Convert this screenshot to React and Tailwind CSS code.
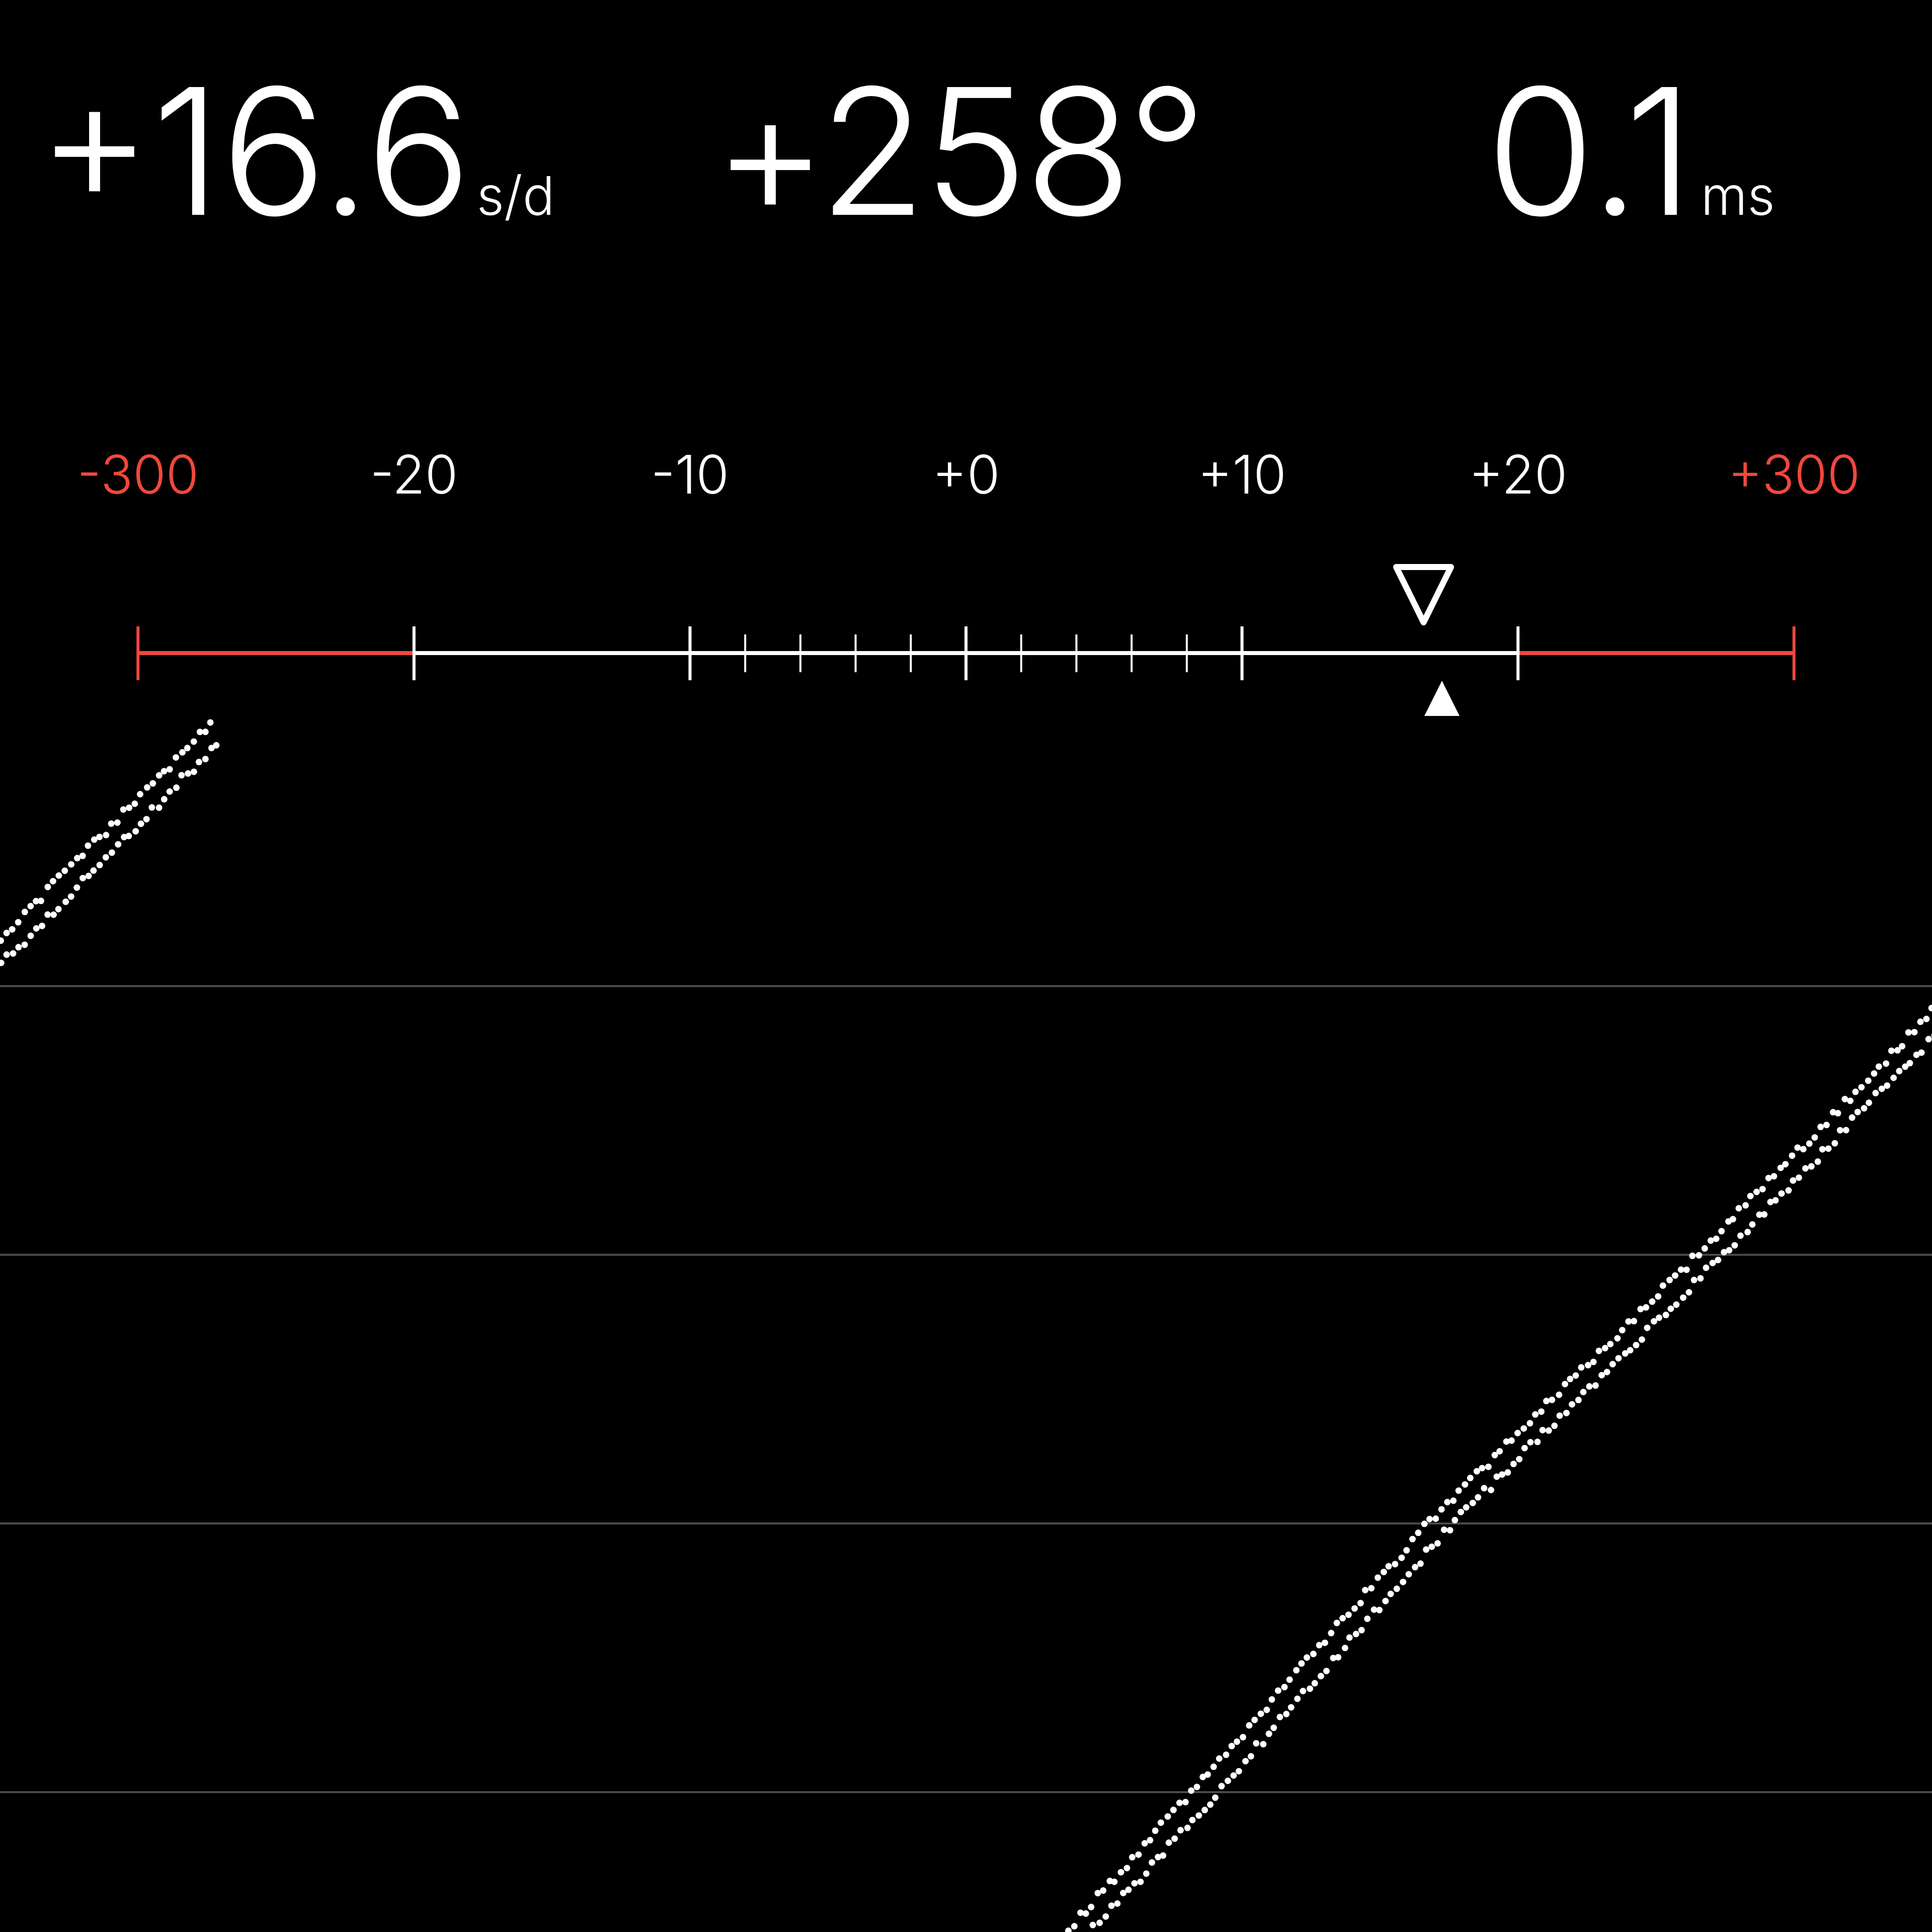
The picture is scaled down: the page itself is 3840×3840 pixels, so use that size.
import React from "react";

const RED = "#f0483c";
const FONT = "[font-family:Inter,'Liberation_Sans',sans-serif]";

const COL = 3840 / 7;
const majors = [0, 1, 2, 3, 4, 5, 6].map((k) => COL / 2 + k * COL);
const minors = [];
for (let k = 1; k < 10; k++) {
  if (k === 5) continue;
  minors.push(majors[2] + (k * COL) / 5);
}

function rnd(i) {
  const s = Math.sin(i * 12.9898 + 78.233) * 43758.5453;
  return s - Math.floor(s);
}

function piecewise(pts) {
  return (x) => {
    for (let i = 0; i < pts.length - 1; i++) {
      const [x0, y0] = pts[i];
      const [x1, y1] = pts[i + 1];
      if (x <= x1 || i === pts.length - 2) {
        const t = (x - x0) / (x1 - x0);
        return y0 + t * (y1 - y0);
      }
    }
    return 0;
  };
}

const TOP = 1425;
const lineRight = piecewise([
  [2080, 3880],
  [2118, 3840],
  [2370, 3562],
  [2837, 3028],
  [3375, 2494],
  [3840, 2012],
  [3900, 1950],
]);
const lineLeft = (x) => 1868 - x * 1.024;

function makeDots(fn, x0, x1, seed) {
  const out = [];
  let i = 0;
  for (let x = x0; x <= x1; x += 11.6) {
    const ny = (rnd(i * 1.7 + seed) - 0.5) * 17;
    const nx = (rnd(i * 2.3 + seed + 11) - 0.5) * 3;
    out.push([x + nx, fn(x) + ny - TOP]);
    i++;
  }
  return out;
}

const dots = [
  ...makeDots(lineRight, 2100, 3850, 1),
  ...makeDots((x) => lineRight(x - 50), 2150, 3850, 50),
  ...makeDots(lineLeft, -10, 422, 100),
  ...makeDots((x) => lineLeft(x - 50), -10, 438, 150),
];

function Ruler() {
  const y = 198;
  return (
    <svg width="3840" height="325" viewBox="0 0 3840 325" className="block">
      <line x1={majors[0]} y1={y} x2={majors[1]} y2={y} stroke={RED} strokeWidth="8" />
      <line x1={majors[1]} y1={y} x2={majors[5]} y2={y} stroke="#fff" strokeWidth="8" />
      <line x1={majors[5]} y1={y} x2={majors[6]} y2={y} stroke={RED} strokeWidth="8" />
      {majors.map((x, i) => (
        <line
          key={i}
          x1={x}
          y1="145"
          x2={x}
          y2="252"
          stroke={i === 0 || i === 6 ? RED : "#fff"}
          strokeWidth="6"
        />
      ))}
      {minors.map((x, i) => (
        <line key={i} x1={x} y1="161" x2={x} y2="236" stroke="#fff" strokeWidth="4" />
      ))}
      <polygon
        points="2775,27 2884,27 2829.5,137"
        fill="none"
        stroke="#fff"
        strokeWidth="12"
        strokeLinejoin="round"
      />
      <polygon points="2866,253 2831,323 2901,323" fill="#fff" />
    </svg>
  );
}

function Plot() {
  const grid = [535, 1069, 1603, 2137];
  return (
    <svg width="3840" height="2415" viewBox="0 0 3840 2415" className="block">
      {grid.map((g) => (
        <line key={g} x1="0" y1={g} x2="3840" y2={g} stroke="#4a4a4a" strokeWidth="4" />
      ))}
      {dots.map(([x, y], i) => (
        <circle key={i} cx={x} cy={y} r="6.5" fill="#fff" />
      ))}
    </svg>
  );
}

export default function App() {
  const labels = [
    { t: "-300", red: true },
    { t: "-20" },
    { t: "-10" },
    { t: "+0" },
    { t: "+10" },
    { t: "+20" },
    { t: "+300", red: true },
  ];
  return (
    <div className={`w-[3840px] h-[3840px] bg-black text-white overflow-hidden flex flex-col ${FONT} font-light`}>
      <div className="flex items-baseline pt-[126px] leading-none">
        <div className="w-[1417px] pl-[74px] flex items-baseline">
          <span className="text-[349px]">+16.6</span>
          <span className="text-[106px] ml-[10px]">s/d</span>
        </div>
        <div className="w-[1537px] flex items-baseline">
          <span className="text-[349px] tracking-[-6px]">+258°</span>
        </div>
        <div className="flex items-baseline">
          <span className="text-[349px]">0.1</span>
          <span className="text-[106px] ml-[14px]">ms</span>
        </div>
      </div>
      <div className="grid grid-cols-7 mt-[415px] leading-none text-[106px]">
        {labels.map((l) => (
          <div key={l.t} className={`text-center ${l.red ? "text-[#f0483c]" : "text-white"}`}>
            {l.t}
          </div>
        ))}
      </div>
      <div className="mt-[104px]">
        <Ruler />
      </div>
      <Plot />
    </div>
  );
}
